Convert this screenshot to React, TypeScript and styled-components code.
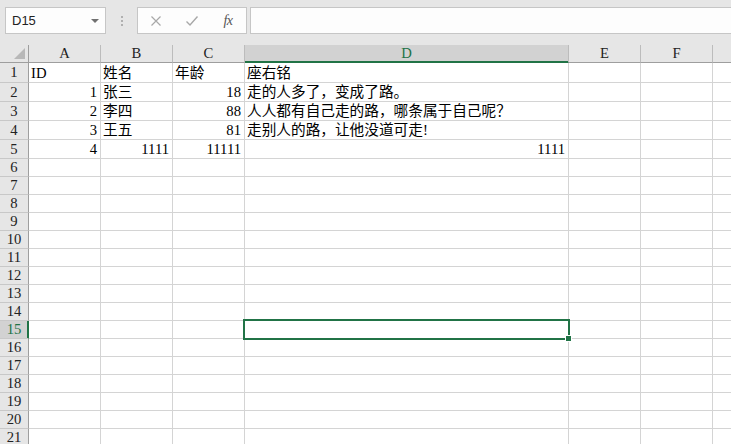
import React from 'react'
import styled, { createGlobalStyle, css } from 'styled-components'

const GlobalStyle = createGlobalStyle`
  html, body {
    margin: 0;
    padding: 0;
    background: #ffffff;
    overflow: hidden;
  }
`

const GREEN = '#217346'
const GRID = '#d4d4d4'
const CELL_FONT = `"Liberation Serif", "Noto Sans CJK SC", serif`

const Shell = styled.div`
  width: 731px;
  height: 444px;
  overflow: hidden;
  display: flex;
  flex-direction: column;
  background: #ffffff;
`

const Toolbar = styled.div`
  height: 45px;
  flex: none;
  display: flex;
  align-items: flex-start;
  padding: 7px 0 0 5px;
  box-sizing: border-box;
  background: #e6e6e6;
`

const NameBox = styled.div`
  width: 101px;
  height: 27px;
  box-sizing: border-box;
  border: 1px solid #c6c6c6;
  background: #fdfdfd;
  display: flex;
  align-items: center;
  justify-content: space-between;
  padding: 0 6px 0 6px;
  font-family: "Liberation Sans", Arial, sans-serif;
  font-size: 13px;
  color: #222;
`

const DropArrow = styled.span`
  width: 0;
  height: 0;
  border-left: 4px solid transparent;
  border-right: 4px solid transparent;
  border-top: 4px solid #707070;
  margin-top: 1px;
`

const Divider = styled.div`
  width: 31px;
  height: 27px;
  display: flex;
  flex-direction: column;
  align-items: center;
  justify-content: center;
  gap: 2px;

  span {
    width: 2px;
    height: 2px;
    background: #b0b0b0;
  }
`

const FormulaButtons = styled.div`
  width: 110px;
  height: 27px;
  box-sizing: border-box;
  border: 1px solid #c6c6c6;
  background: #fdfdfd;
  display: flex;
`

const ToolButton = styled.div`
  width: 36px;
  height: 25px;
  display: flex;
  align-items: center;
  justify-content: center;
  color: #a8a8a8;
`

const FxLabel = styled.span`
  font-family: "Liberation Serif", serif;
  font-style: italic;
  font-size: 14px;
  color: #555;
  letter-spacing: -0.5px;
`

const FormulaInput = styled.div`
  flex: 1;
  height: 27px;
  margin-left: 3px;
  margin-right: -2px;
  box-sizing: border-box;
  border: 1px solid #c6c6c6;
  background: #fdfdfd;
`

const Sheet = styled.div`
  flex: 1;
  overflow: hidden;
  display: grid;
  grid-template-columns: 29px 72px 72px 72px 324px 72px 72px 72px;
  grid-template-rows: 18px 20px repeat(4, 19px) repeat(17, 18px);
  font-family: ${CELL_FONT};
  font-size: 14.67px;
  color: #000;
`

const Corner = styled.div`
  position: relative;
  background: #e6e6e6;
  border-right: 1px solid #9e9e9e;
  border-bottom: 1px solid #9e9e9e;
  box-sizing: border-box;

  &::after {
    content: '';
    position: absolute;
    right: 3px;
    bottom: 3px;
    width: 0;
    height: 0;
    border-left: 11px solid transparent;
    border-bottom: 11px solid #b8b8b8;
  }
`

const ColHead = styled.div<{ $active?: boolean }>`
  box-sizing: border-box;
  display: flex;
  align-items: center;
  justify-content: center;
  background: #e6e6e6;
  border-right: 1px solid #bcbcbc;
  border-bottom: 1px solid #9e9e9e;
  color: #222;
  line-height: 1;
  ${p =>
    p.$active &&
    css`
      background: #d2d2d2;
      color: ${GREEN};
      border-bottom-color: ${GREEN};
      box-shadow: inset 0 -1px 0 ${GREEN};
    `}
`

const RowHead = styled.div<{ $active?: boolean }>`
  box-sizing: border-box;
  display: flex;
  align-items: center;
  justify-content: center;
  background: #e6e6e6;
  border-right: 1px solid #9e9e9e;
  border-bottom: 1px solid #c8c8c8;
  color: #222;
  line-height: 1;
  ${p =>
    p.$active &&
    css`
      background: #d2d2d2;
      color: ${GREEN};
      border-right-color: ${GREEN};
      box-shadow: inset -1px 0 0 ${GREEN};
    `}
`

const Cell = styled.div<{ $align?: 'left' | 'right' }>`
  position: relative;
  box-sizing: border-box;
  display: flex;
  align-items: center;
  justify-content: ${p => (p.$align === 'right' ? 'flex-end' : 'flex-start')};
  padding: 1px 3px 0 2px;
  border-right: 1px solid ${GRID};
  border-bottom: 1px solid ${GRID};
  white-space: nowrap;
  line-height: 1;
`

const Selection = styled.div`
  position: absolute;
  inset: -2px;
  border: 2px solid ${GREEN};
  pointer-events: none;
  z-index: 2;
`

const FillHandle = styled.div`
  position: absolute;
  right: -4px;
  bottom: -4px;
  width: 7px;
  height: 7px;
  box-sizing: border-box;
  background: ${GREEN};
  border: 1px solid #ffffff;
`

// the last column lies mostly past the window edge, so its letter is not drawn
const columns = ['A', 'B', 'C', 'D', 'E', 'F', '']

type Value = string | number | null

const data: Value[][] = [
  ['ID', '姓名', '年龄', '座右铭'],
  [1, '张三', 18, '走的人多了，变成了路。'],
  [2, '李四', 88, '人人都有自己走的路，哪条属于自己呢？'],
  [3, '王五', 81, '走别人的路，让他没道可走!'],
  [4, 1111, 11111, 1111],
]

const ROW_COUNT = 22
const ACTIVE_ROW = 15
const ACTIVE_COL = 3

const CrossIcon = () => (
  <svg width="12" height="12" viewBox="0 0 12 12">
    <path d="M1.5 1.5 L10.5 10.5 M10.5 1.5 L1.5 10.5" stroke="currentColor" strokeWidth="1.2" fill="none" />
  </svg>
)

const CheckIcon = () => (
  <svg width="14" height="12" viewBox="0 0 14 12">
    <path d="M1.5 6.5 L5 10 L12.5 1.5" stroke="currentColor" strokeWidth="1.4" fill="none" />
  </svg>
)

export default function App() {
  return (
    <>
      <GlobalStyle />
      <Shell>
        <Toolbar>
          <NameBox>
            <span>D15</span>
            <DropArrow />
          </NameBox>
          <Divider>
            <span />
            <span />
            <span />
          </Divider>
          <FormulaButtons>
            <ToolButton>
              <CrossIcon />
            </ToolButton>
            <ToolButton>
              <CheckIcon />
            </ToolButton>
            <ToolButton>
              <FxLabel>fx</FxLabel>
            </ToolButton>
          </FormulaButtons>
          <FormulaInput />
        </Toolbar>

        <Sheet>
          <Corner />
          {columns.map((c, i) => (
            <ColHead key={i} $active={i === ACTIVE_COL}>
              {c}
            </ColHead>
          ))}

          {Array.from({ length: ROW_COUNT }, (_, r) => {
            const rowNo = r + 1
            const values = data[r] || []
            return (
              <React.Fragment key={rowNo}>
                <RowHead $active={rowNo === ACTIVE_ROW}>{rowNo}</RowHead>
                {columns.map((_c, ci) => {
                  const v = values[ci] ?? null
                  const selected = rowNo === ACTIVE_ROW && ci === ACTIVE_COL
                  return (
                    <Cell key={ci} $align={typeof v === 'number' ? 'right' : 'left'}>
                      {v}
                      {selected && (
                        <Selection>
                          <FillHandle />
                        </Selection>
                      )}
                    </Cell>
                  )
                })}
              </React.Fragment>
            )
          })}
        </Sheet>
      </Shell>
    </>
  )
}
